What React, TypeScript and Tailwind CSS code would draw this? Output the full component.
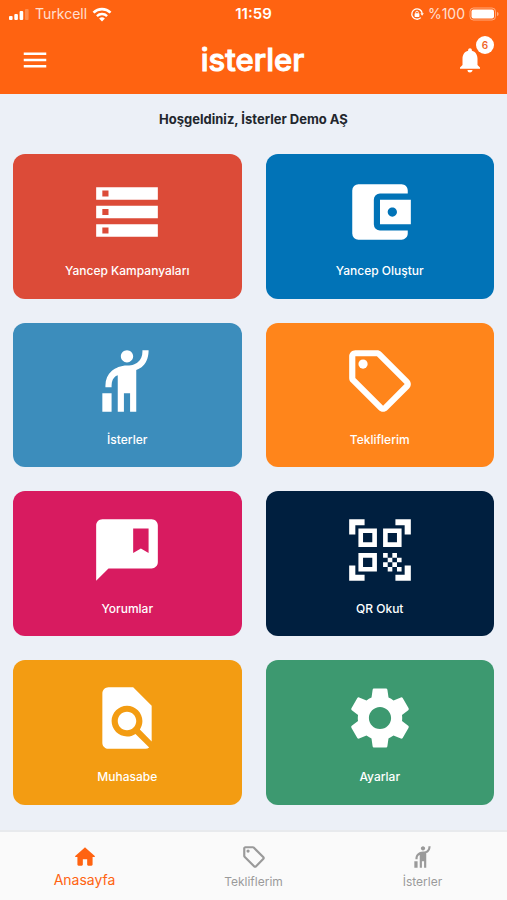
import React from "react";
import {
  MdAccountBalanceWallet,
  MdFindInPage,
  MdHail,
  MdMenu,
  MdNotifications,
  MdOutlineLocalOffer,
  MdQrCodeScanner,
  MdSettings,
  MdStorage,
} from "react-icons/md";

type IconProps = { className?: string };

function CommentBookmarkIcon({ className }: IconProps) {
  return (
    <svg viewBox="0 0 24 24" fill="currentColor" className={className} aria-hidden="true">
      <path
        fillRule="evenodd"
        d="M20 2H4c-1.1 0-2 .9-2 2v18l4-4h14c1.1 0 2-.9 2-2V4c0-1.1-.9-2-2-2zM14 5h5v8l-2.5-1.5L14 13V5z"
      />
    </svg>
  );
}

function HomeIcon({ className }: IconProps) {
  return (
    <svg viewBox="0 0 24 24" fill="currentColor" className={className} aria-hidden="true">
      <path d="M10 19v-5h4v5c0 .55.45 1 1 1h3c.55 0 1-.45 1-1v-7h1.7c.46 0 .68-.57.33-.87L12.67 3.6c-.38-.34-.96-.34-1.34 0l-8.36 7.53c-.34.3-.13.87.33.87H5v7c0 .55.45 1 1 1h3c.55 0 1-.45 1-1z" />
    </svg>
  );
}

const cards = [
  { label: "Yancep Kampanyaları", icon: MdStorage, color: "bg-[#dc4b38]" },
  { label: "Yancep Oluştur", icon: MdAccountBalanceWallet, color: "bg-[#0173b7]" },
  { label: "İsterler", icon: MdHail, color: "bg-[#3c8dbc]" },
  { label: "Tekliflerim", icon: MdOutlineLocalOffer, color: "bg-[#ff851b]" },
  { label: "Yorumlar", icon: CommentBookmarkIcon, color: "bg-[#d81b60]" },
  { label: "QR Okut", icon: MdQrCodeScanner, color: "bg-[#001f3f]" },
  { label: "Muhasabe", icon: MdFindInPage, color: "bg-[#f39c12]" },
  { label: "Ayarlar", icon: MdSettings, color: "bg-[#3d9970]" },
];

function StatusBar() {
  return (
    <div className="grid h-7 grid-cols-3 items-center px-2 text-sm text-white">
      <div className="flex items-center gap-1">
        <svg viewBox="0 0 22 12" className="h-3 w-[22px]" fill="currentColor" aria-hidden="true">
          <rect x="1" y="8" width="3.600" height="4" rx="1" />
          <rect x="6.300" y="6" width="3.600" height="6" rx="1" />
          <rect x="11.600" y="3" width="3.600" height="9" rx="1" />
          <rect x="17" y="1" width="3.600" height="11" rx="1" opacity="0.250" />
        </svg>
        <span className="ml-px opacity-80">Turkcell</span>
        <svg viewBox="0 0 20 15" className="ml-px h-[15px] w-5" fill="none" stroke="currentColor" aria-hidden="true">
          <path d="M1.500 5.600a12.200 12.200 0 0 1 17 0" strokeWidth="2.600" />
          <path d="M4.900 9.100a7.300 7.300 0 0 1 10.200 0" strokeWidth="2.400" />
          <path d="M10 14.600l-2.900-3a4.200 4.200 0 0 1 5.800 0z" fill="currentColor" stroke="none" />
        </svg>
      </div>
      <span className="text-center text-[15px] font-semibold">11:59</span>
      <div className="flex items-center justify-end gap-1">
        <svg viewBox="0 0 14 14" className="h-3.5 w-3.5" fill="none" stroke="currentColor" aria-hidden="true">
          <path d="M10.800 10.600A5.200 5.200 0 1 1 12.200 6.500" strokeWidth="1.300" />
          <path d="M10.400 6.300h3.400l-1.700 2.500z" fill="currentColor" stroke="none" />
          <rect x="4.600" y="6.300" width="4.800" height="3.600" rx="0.600" fill="currentColor" stroke="none" />
          <path d="M5.700 6.500V5.500a1.300 1.300 0 0 1 2.600 0v1" strokeWidth="0.900" />
        </svg>
        <span className="opacity-80">%100</span>
        <svg viewBox="0 0 30 14" className="h-3.5 w-[30px]" aria-hidden="true">
          <rect x="1" y="1" width="25.500" height="12" rx="3.500" fill="none" stroke="#fff" strokeOpacity="0.450" />
          <rect x="2.500" y="2.500" width="22.500" height="9" rx="2" fill="#fff" />
          <path d="M28 5c1.200.4 1.600 1.200 1.600 2s-.4 1.600-1.600 2z" fill="#fff" fillOpacity="0.450" />
        </svg>
      </div>
    </div>
  );
}

export default function App() {
  return (
    <div className="flex min-h-screen flex-col bg-[#ecf0f7] font-['Inter',sans-serif]">
      <header className="bg-[#ff6311]">
        <StatusBar />

        {/* LOGO E MENU */}
        <div className="flex h-[66px] items-center justify-between pr-[22px] pb-0.5 pl-5 text-white">
          <button type="button" aria-label="Menü">
            <MdMenu className="h-[30px] w-[30px]" />
          </button>
          <h1 className="text-[31px] leading-8 font-medium [-webkit-text-stroke:1px_#fff]">isterler</h1>
          <button type="button" aria-label="Bildirimler" className="relative">
            <MdNotifications className="h-[30px] w-[30px]" />
            <span className="absolute -top-[9px] -right-[9px] flex h-[18px] w-[18px] items-center justify-center rounded-full bg-white text-[10px] font-semibold text-[#f0652a]">
              6
            </span>
          </button>
        </div>
      </header>

      <main className="flex-1 px-[13px] pt-4 pb-6">
        <p className="text-center text-[13px] leading-[18px] font-bold text-[#22262d]">
          Hoşgeldiniz, İsterler Demo AŞ
        </p>

        <div className="mt-[26px] grid grid-cols-2 gap-6">
          {cards.map(({ label, icon: Icon, color }) => (
            <button
              key={label}
              type="button"
              className={`flex aspect-[229/145] flex-col items-center justify-center gap-[13px] rounded-xl pt-[3px] text-white ${color}`}
            >
              <Icon className="h-[74px] w-[74px]" />
              <span className="text-xs leading-[18px] font-medium">{label}</span>
            </button>
          ))}
        </div>
      </main>

      <nav className="grid h-[70px] grid-cols-3 border-t-2 border-[#e8eaed] bg-[#fafafa] text-xs text-[#9a9a9a]">
        <a href="#anasayfa" className="flex flex-col items-center pt-3 text-sm text-[#ff6311]">
          <HomeIcon className="h-[26px] w-[26px]" />
          <span className="leading-5">Anasayfa</span>
        </a>
        <a href="#tekliflerim" className="flex flex-col items-center pt-3">
          <MdOutlineLocalOffer className="h-[26px] w-[26px]" />
          <span className="leading-6">Tekliflerim</span>
        </a>
        <a href="#isterler" className="flex flex-col items-center pt-3">
          <MdHail className="h-[26px] w-[26px]" />
          <span className="leading-6">İsterler</span>
        </a>
      </nav>
    </div>
  );
}
